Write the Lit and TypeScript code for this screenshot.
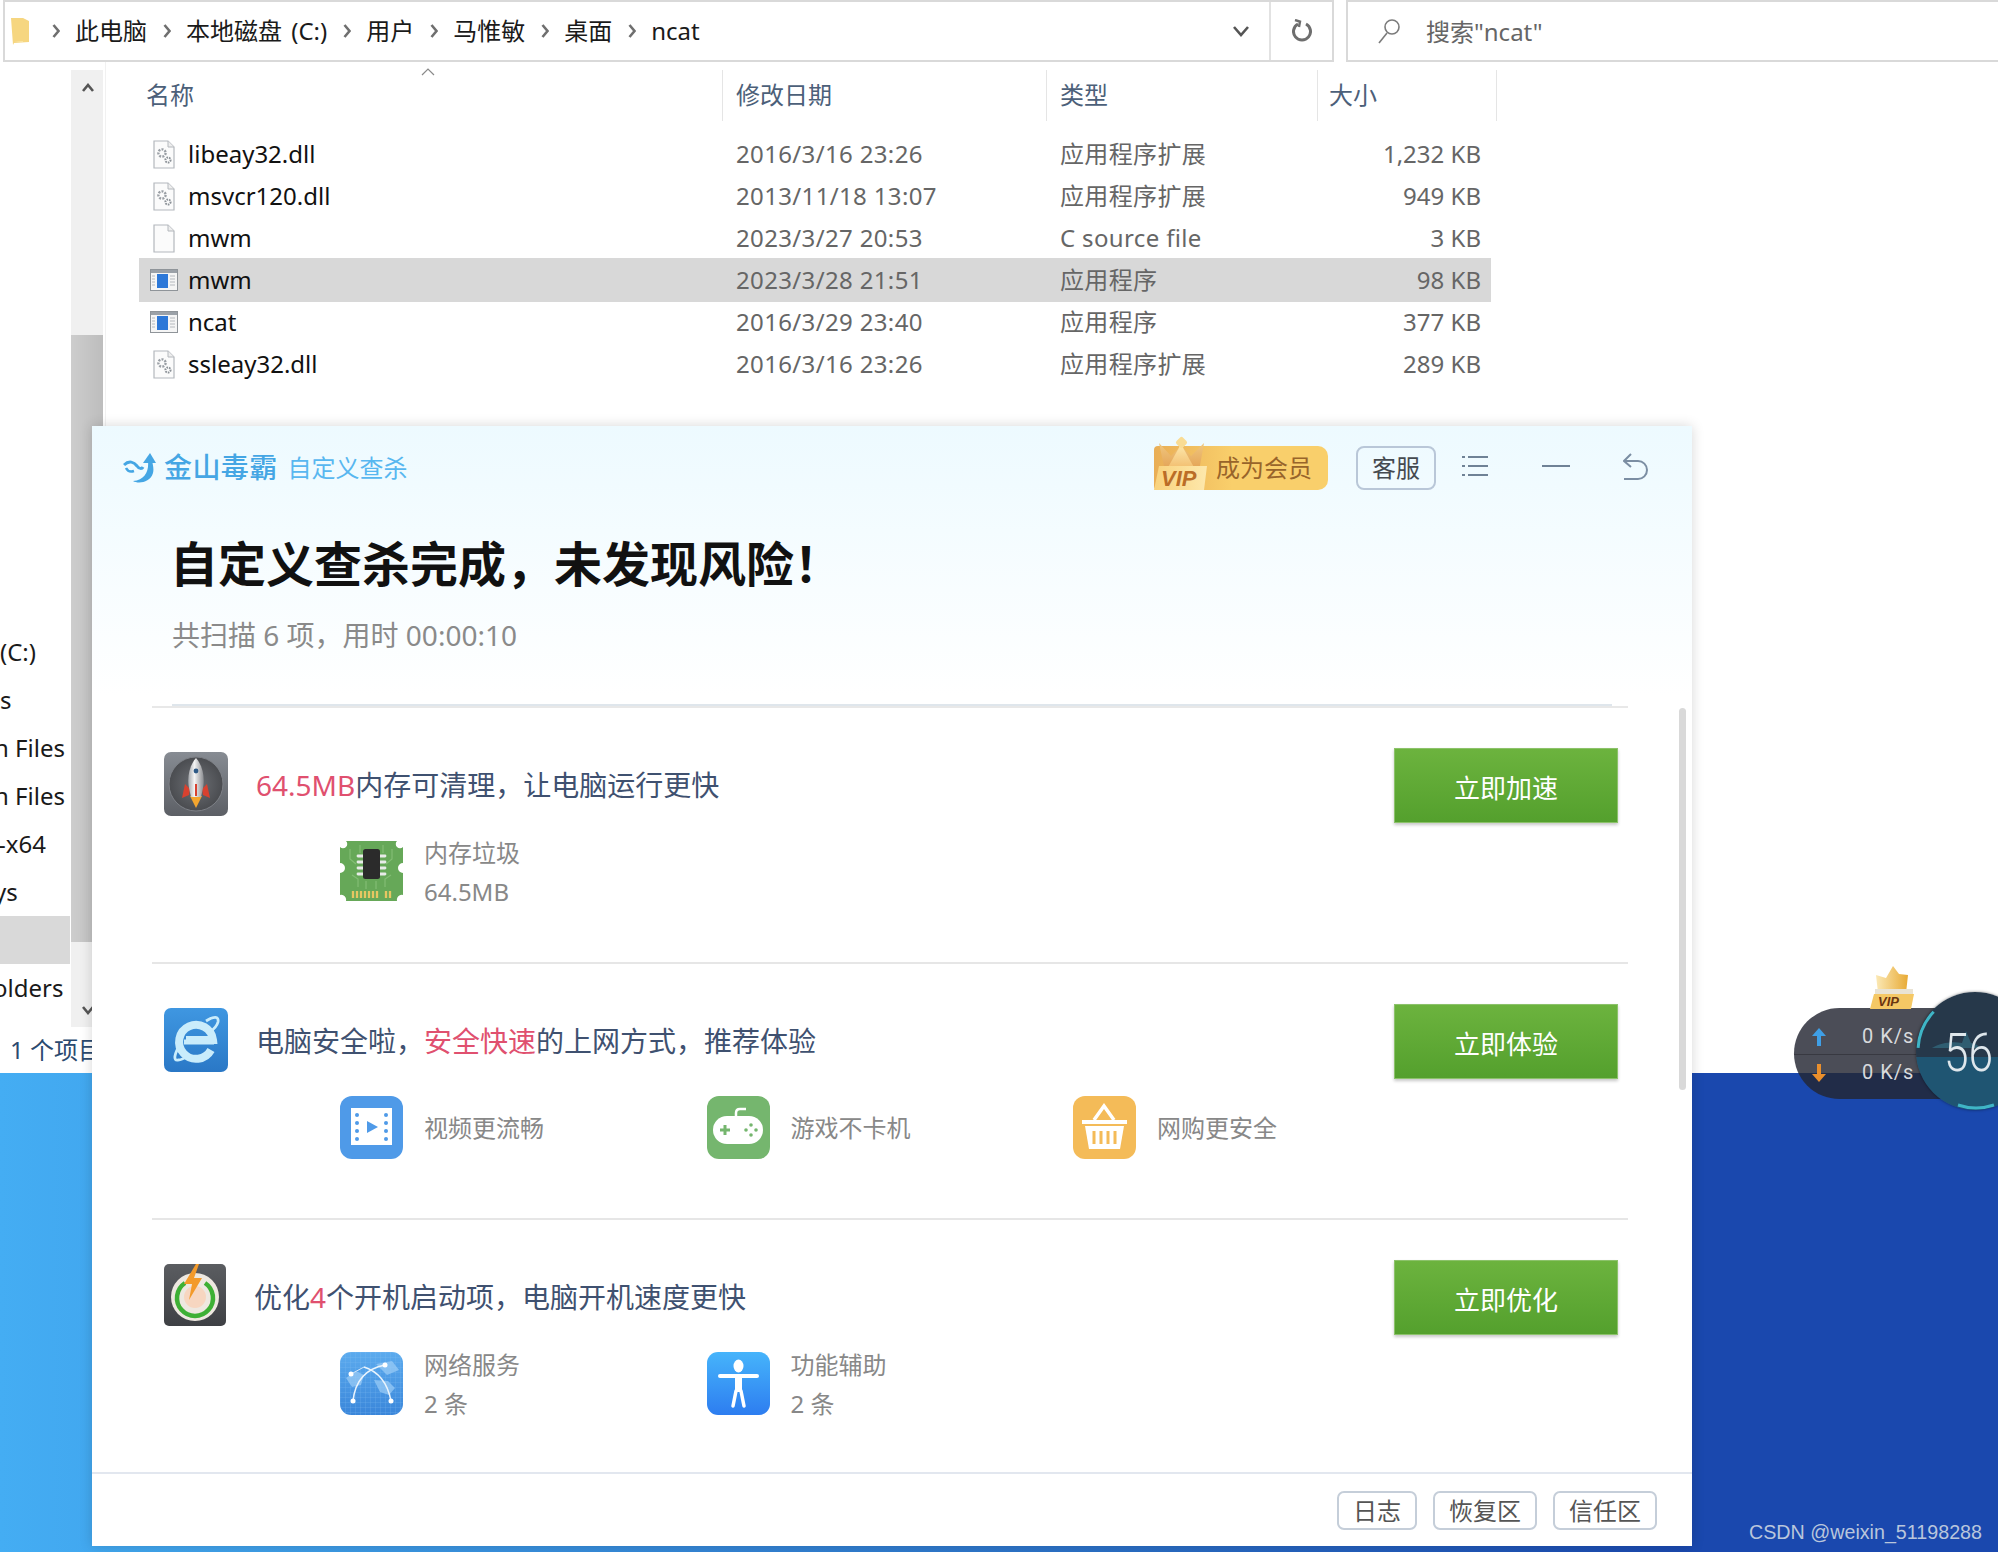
import { LitElement, html, svg, css, nothing } from 'lit';
import { customElement } from 'lit/decorators.js';

const FILES = [
  { name: 'libeay32.dll', date: '2016/3/16 23:26', type: '应用程序扩展', size: '1,232 KB', icon: 'dll' },
  { name: 'msvcr120.dll', date: '2013/11/18 13:07', type: '应用程序扩展', size: '949 KB', icon: 'dll' },
  { name: 'mwm', date: '2023/3/27 20:53', type: 'C source file', size: '3 KB', icon: 'file' },
  { name: 'mwm', date: '2023/3/28 21:51', type: '应用程序', size: '98 KB', icon: 'exe', selected: true },
  { name: 'ncat', date: '2016/3/29 23:40', type: '应用程序', size: '377 KB', icon: 'exe' },
  { name: 'ssleay32.dll', date: '2016/3/16 23:26', type: '应用程序扩展', size: '289 KB', icon: 'dll' },
];

// the window is covered by the antivirus popup, only the left of each label shows... cut to what is visible
const NAV = [
  { text: '(C:)', cut: 0 },
  { text: 's', cut: 0 },
  { text: 'n Files', cut: -6 },
  { text: 'n Files', cut: -6 },
  { text: '-x64', cut: -2 },
  { text: 'ys', cut: -6 },
  { text: '', cut: 0 },
  { text: 'olders', cut: -7 },
];
const CRUMBS = ['此电脑', '本地磁盘 (C:)', '用户', '马惟敏', '桌面', 'ncat'];

// ---- explorer icons ----

function fileIcon(kind: string) {
  if (kind === 'exe') {
    return html`<svg class="ficon exe" width="28" height="22" viewBox="0 0 28 22">
      <rect x=".5" y=".5" width="27" height="21" fill="#f5f5f5" stroke="#8f9499"/>
      <rect x="1" y="1" width="26" height="3" fill="#9ba1a8"/>
      <rect x="7" y="5" width="11" height="14" fill="#2d78d8"/>
      <path d="M20 7h5M20 10h5M20 13h5M20 16h5M2 7h3M2 10h3M2 13h3M2 16h3" stroke="#b5b9be" stroke-width="1"/>
    </svg>`;
  }
  return html`<svg class="ficon" width="22" height="29" viewBox="0 0 22 29">
    <path d="M1 1h14l6 6v21H1z" fill="#fbfbfb" stroke="#b4b8bd" stroke-width="1.2"/>
    <path d="M15 1v6h6" fill="#eee" stroke="#b4b8bd"/>
    ${kind === 'dll' ? svg`
      <circle cx="9" cy="13" r="3.6" fill="none" stroke="#9a9fa5" stroke-width="2.4" stroke-dasharray="2 1.2"/>
      <circle cx="15" cy="20" r="2.6" fill="none" stroke="#8b9197" stroke-width="2" stroke-dasharray="1.6 1"/>
    ` : nothing}
  </svg>`;
}

@customElement('file-explorer')
class FileExplorer extends LitElement {
  static styles = css`
    :host {
      display: flex;
      flex-direction: column;
      width: 1998px;
      height: 1073px;
      background: #fff;
      font-family: 'Noto Sans', 'Noto Sans CJK SC', sans-serif;
      font-size: 24px;
      color: #1a1a1a;
    }
    svg { display: block; flex: none; }
    .top { display: flex; height: 62px; flex: none; }
    .address {
      width: 1331px;
      margin-left: 3px;
      box-sizing: border-box;
      display: flex;
      align-items: center;
      border: 2px solid #d9d9d9;
    }
    .folder { margin-left: 6px; }
    .crumb { line-height: 30px; white-space: nowrap; word-spacing: 3px; }
    .sep { width: 39px; display: flex; justify-content: center; flex: none; }
    .sep.first { margin-left: 6px; }
    .dropdown { margin-left: auto; margin-right: 19px; }
    .refresh {
      width: 61px;
      height: 100%;
      border-left: 2px solid #e2e2e2;
      display: flex;
      align-items: center;
      justify-content: center;
    }
    .search {
      margin-left: 12px;
      flex: 1;
      box-sizing: border-box;
      border: 2px solid #d9d9d9;
      border-right: 0;
      display: flex;
      align-items: center;
      padding-left: 29px;
      gap: 25px;
      color: #666;
    }
    .search span { position: relative; top: -1px; }
    .body { flex: 1; display: flex; min-height: 0; }
    .nav { width: 71px; padding-top: 566px; flex: none; box-sizing: border-box; }
    .nav div { height: 48px; line-height: 48px; white-space: nowrap; overflow: hidden; }
    .nav .on { background: #d9d9d9; width: 70px; }
    .scroll {
      width: 32px;
      margin-top: 8px;
      flex: none;
      background: #f0f0f0;
      display: flex;
      flex-direction: column;
    }
    .scroll .head { height: 265px; padding: 13px 0 0 10px; box-sizing: border-box; }
    .scroll .thumb { height: 607px; background: linear-gradient(90deg, #cdcdcd, #bdbdbd); }
    .scroll .foot { flex: 1; padding: 63px 0 0 10px; box-sizing: border-box; }
    .list { position: relative; flex: 1; padding: 8px 0 0 34px; margin-left: 2px; border-left: 1px solid #f1f1f1; }
    .heads {
      display: grid;
      grid-template-columns: 583px 324px 271px 179px;
      width: 1357px;
      height: 51px;
      color: #4c6079;
      margin-bottom: 12px;
    }
    .heads div { line-height: 50px; padding-left: 13px; border-right: 1px solid #e5e5e5; }
    .heads div:first-child { padding-left: 6px; }
    .heads div:last-child { padding-left: 11px; }
    .sort { position: absolute; left: 315px; top: 6px; }
    .row {
      display: grid;
      grid-template-columns: 583px 324px 271px 172px;
      width: 1350px;
      height: 42px;
      align-items: center;
      line-height: 42px;
      color: #666;
      white-space: nowrap;
    }
    .row.sel { background: #d8d8d8; box-shadow: 0 0 0 1px #d8d8d8; }
    .row > div { padding-left: 13px; letter-spacing: .35px; }
    .row > .name { display: flex; align-items: center; color: #111; letter-spacing: 0; }
    .slot { width: 35px; display: flex; }
    .ficon.exe { margin-left: -3px; }
    .row > .size { text-align: right; padding: 0 9px 0 0; letter-spacing: 0; }
    .status {
      height: 46px;
      flex: none;
      line-height: 46px;
      padding-left: 10px;
      color: #2b4a6f;
    }
  `;

  chevron() {
    return html`<svg width="8" height="16" viewBox="0 0 8 16"><path d="M1.5 2l5 6-5 6" fill="none" stroke="#6f6f6f" stroke-width="2.600"/></svg>`;
  }

  render() {
    return html`
      <div class="top">
        <div class="address">
          <svg class="folder" width="19" height="27" viewBox="0 0 19 27">
            <path d="M0 0h12l6 3v21l-15 1-1 2z" fill="#f6d680"/><path d="M12 0v24H3l9-1z" fill="#fbe7ab"/>
          </svg>
          <span class="sep first">${this.chevron()}</span>
          ${CRUMBS.map((c, i) => html`
            <span class="crumb">${c}</span>
            ${i < CRUMBS.length - 1 ? html`<span class="sep">${this.chevron()}</span>` : nothing}
          `)}
          <svg class="dropdown" width="18" height="12" viewBox="0 0 18 12"><path d="M2 2l7 8 7-8" fill="none" stroke="#555" stroke-width="2.600"/></svg>
          <div class="refresh">
            <svg width="20" height="24" viewBox="0 0 20 24"><path d="M6 5a8.500 8.500 0 1 0 8 0" fill="none" stroke="#6e6e6e" stroke-width="3"/><path d="M3 1l5 1.500-1 5.500" fill="none" stroke="#6e6e6e" stroke-width="2.400"/></svg>
          </div>
        </div>
        <div class="search">
          <svg width="24" height="26" viewBox="0 0 24 26"><circle cx="15" cy="9" r="7" fill="none" stroke="#7b7b7b" stroke-width="1.600"/><path d="M10 15L2 25" stroke="#7b7b7b" stroke-width="1.600"/></svg>
          <span>搜索"ncat"</span>
        </div>
      </div>
      <div class="body">
        <div class="nav">
          ${NAV.map(n => html`<div class=${n.text ? '' : 'on'} style="text-indent:${n.cut}px">${n.text}</div>`)}
        </div>
        <div class="scroll">
          <div class="head"><svg width="14" height="10" viewBox="0 0 14 10"><path d="M2 8l5-6 5 6" fill="none" stroke="#555" stroke-width="2.600"/></svg></div>
          <div class="thumb"></div>
          <div class="foot"><svg width="14" height="10" viewBox="0 0 14 10"><path d="M2 2l5 6 5-6" fill="none" stroke="#555" stroke-width="2.600"/></svg></div>
        </div>
        <div class="list">
          <svg class="sort" width="14" height="8" viewBox="0 0 14 8"><path d="M1 7l6-6 6 6" fill="none" stroke="#8a8a8a" stroke-width="1.200"/></svg>
          <div class="heads"><div>名称</div><div>修改日期</div><div>类型</div><div>大小</div></div>
          ${FILES.map(f => html`
            <div class="row ${f.selected ? 'sel' : ''}">
              <div class="name"><span class="slot">${fileIcon(f.icon)}</span>${f.name}</div>
              <div>${f.date}</div>
              <div>${f.type}</div>
              <div class="size">${f.size}</div>
            </div>
          `)}
        </div>
      </div>
      <div class="status">1 个项目</div>
    `;
  }
}

// ---- antivirus window icons ----

const rocketIcon = html`<svg width="64" height="64" viewBox="0 0 64 64">
  <defs>
    <linearGradient id="rb" x1="0" y1="0" x2="0" y2="1"><stop offset="0" stop-color="#878c93"/><stop offset="1" stop-color="#5c5f65"/></linearGradient>
    <radialGradient id="rc"><stop offset="0" stop-color="#6d7075"/><stop offset="1" stop-color="#4a4c50"/></radialGradient>
    <linearGradient id="rs" x1="0" x2="1"><stop offset="0" stop-color="#a5a8ac"/><stop offset=".4" stop-color="#f4f4f4"/><stop offset="1" stop-color="#8a8c90"/></linearGradient>
  </defs>
  <rect width="64" height="64" rx="7" fill="url(#rb)"/>
  <circle cx="32" cy="32" r="27" fill="url(#rc)" stroke="#7d8086"/>
  <path d="M21 32l-3 14 7-3 1-6zM43 32l3 14-7-3-1-6z" fill="#d8412f"/>
  <path d="M26 44l6 12 6-12z" fill="#f3a52e"/>
  <path d="M32 6c-7 8-9 20-7 30l2 9h10l2-9c2-10 0-22-7-30z" fill="url(#rs)"/>
  <path d="M31 32h2v12h-2z" fill="#d8412f"/>
  <circle cx="32" cy="19" r="2.400" fill="#2e5a86"/>
</svg>`;

const ieIcon = html`<svg width="64" height="64" viewBox="0 0 64 64">
  <defs><linearGradient id="ib" x1="0" y1="0" x2="0" y2="1"><stop offset="0" stop-color="#3f97e1"/><stop offset="1" stop-color="#2a78c6"/></linearGradient></defs>
  <rect width="64" height="64" rx="7" fill="url(#ib)"/>
  <path d="M42 13c8-5 13-5 12 1-1 4-4 7-8 10M17 35c-7 11-8 18-3 17 3 0 7-2 11-5" fill="none" stroke="#c9ecfb" stroke-width="2.800"/>
  <path d="M47 42a17 17 0 1 1 2-10H22" fill="none" stroke="#c9ecfb" stroke-width="8"/>
  <path d="M20 34h30" stroke="#c9ecfb" stroke-width="5"/>
</svg>`;

const powerIcon = html`<svg width="62" height="62" viewBox="0 0 62 62">
  <defs><linearGradient id="pb" x1="0" y1="0" x2="0" y2="1"><stop offset="0" stop-color="#5b5d61"/><stop offset="1" stop-color="#3e4044"/></linearGradient></defs>
  <rect width="62" height="62" rx="5" fill="url(#pb)"/>
  <circle cx="31" cy="33" r="24" fill="#eee8e0"/>
  <circle cx="31" cy="33" r="11" fill="#f7d6c0"/>
  <path d="M21 19a18 18 0 1 0 20 0" fill="none" stroke="#3eb035" stroke-width="4.500"/>
  <path d="M32 0L20 20h8l-3 16 13-22h-8l5-14z" fill="#f39a2a"/>
</svg>`;

const chipIcon = html`<svg width="63" height="61" viewBox="0 0 63 61">
  <path d="M6 0h51a4 4 0 0 0 6 6v16a5 5 0 0 0 0 10v22a5 5 0 0 0-6 6H6a5 5 0 0 0-6-6V32a5 5 0 0 0 0-10V6a4 4 0 0 0 6-6z" fill="#66a858"/>
  <path d="M10 8v10l6 5M52 8v10l-6 5M20 4v8M43 4v8M12 34l6 4v8M51 34l-6 4v8M26 40v8M36 40v8" fill="none" stroke="#82bd73" stroke-width="1.200"/>
  <path d="M18 15h6M18 21h6M18 27h6M18 33h6M39 15h6M39 21h6M39 27h6M39 33h6" stroke="#e8ebe8" stroke-width="2.800" stroke-linecap="round"/>
  <rect x="23" y="8" width="17" height="30" rx="2.500" fill="#2b2b2b"/>
  <path d="M13 50v7M17 50v7M21 50v7M25 50v7M29 50v7M33 50v7M37 50v7M46 50v7M50 50v7" stroke="#e7c662" stroke-width="2.300"/>
</svg>`;

const videoIcon = html`<svg width="63" height="63" viewBox="0 0 63 63">
  <rect width="63" height="63" rx="12" fill="#4f9ae8"/>
  <rect x="11" y="12" width="41" height="37" fill="#fff"/>
  <g fill="#4f9ae8">
    <circle cx="17" cy="19" r="2"/><circle cx="17" cy="27" r="2"/><circle cx="17" cy="35" r="2"/><circle cx="17" cy="43" r="2"/>
    <circle cx="46" cy="19" r="2"/><circle cx="46" cy="27" r="2"/><circle cx="46" cy="35" r="2"/><circle cx="46" cy="43" r="2"/>
    <path d="M27 25l11 6-11 6z"/>
  </g>
</svg>`;

const gameIcon = html`<svg width="63" height="63" viewBox="0 0 63 63">
  <rect width="63" height="63" rx="12" fill="#75b66e"/>
  <path d="M29 21v-4c0-3 2-4 4-4h6" fill="none" stroke="#fff" stroke-width="2.500"/>
  <rect x="6" y="20" width="50" height="28" rx="14" fill="#fff"/>
  <path d="M18 29v10M13 34h10" stroke="#75b66e" stroke-width="3"/>
  <g fill="#75b66e"><circle cx="44" cy="29" r="1.800"/><circle cx="44" cy="39" r="1.800"/><circle cx="39" cy="34" r="1.800"/><circle cx="49" cy="34" r="1.800"/></g>
</svg>`;

const basketIcon = html`<svg width="63" height="63" viewBox="0 0 63 63">
  <rect width="63" height="63" rx="12" fill="#f4bb58"/>
  <path d="M21 24l10-14 10 14" fill="none" stroke="#fff" stroke-width="3.500"/>
  <rect x="9" y="24" width="45" height="4" fill="#fff"/>
  <path d="M12 30h39l-4 23H16z" fill="#fff"/>
  <path d="M21 35v13M28 35v13M35 35v13M42 35v13" stroke="#f4bb58" stroke-width="3"/>
</svg>`;

const netIcon = html`<svg width="63" height="63" viewBox="0 0 63 63">
  <defs>
    <linearGradient id="nb" x1="0" y1="0" x2="0" y2="1"><stop offset="0" stop-color="#5cabee"/><stop offset="1" stop-color="#3a86da"/></linearGradient>
    <pattern id="ng" width="5" height="5" patternUnits="userSpaceOnUse"><path d="M5 0H0v5" fill="none" stroke="#8cc4f3" stroke-width=".5"/></pattern>
  </defs>
  <rect width="63" height="63" rx="11" fill="url(#nb)"/>
  <rect width="63" height="63" rx="11" fill="url(#ng)" opacity=".7"/>
  <path d="M6 26l10-7 8 4-3 10-9 2zM36 12l16-3 7 9-12 5zM34 28l14 1 7 7-6 7-9-3z" fill="#9ccdf6" opacity=".7"/>
  <path d="M13 49C15 30 24 17 45 13M51 49C48 33 40 20 24 15" fill="none" stroke="#eaf4fd" stroke-width="1.500"/>
  <path d="M11 22L24 15" fill="none" stroke="#cfe5fa" stroke-width="1"/>
  <g fill="#fff"><circle cx="13" cy="49" r="2.500"/><circle cx="51" cy="49" r="2.500"/><circle cx="11" cy="22" r="2.500"/><circle cx="45" cy="13" r="2.500"/></g>
</svg>`;

const accessIcon = html`<svg width="63" height="63" viewBox="0 0 63 63">
  <defs><linearGradient id="ab" x1="0" y1="0" x2="0" y2="1"><stop offset="0" stop-color="#46b4fb"/><stop offset="1" stop-color="#2d7df0"/></linearGradient></defs>
  <rect width="63" height="63" rx="11" fill="url(#ab)"/>
  <ellipse cx="31.500" cy="14" rx="5" ry="6.500" fill="#fff"/>
  <path d="M13 24h37" stroke="#fff" stroke-width="4" stroke-linecap="round"/>
  <path d="M28 25h7v15h-7z" fill="#fff"/>
  <path d="M34 39l3 15M29 39l-3 15" fill="none" stroke="#fff" stroke-width="3.500" stroke-linecap="round"/>
</svg>`;

const SECTIONS = [
  {
    icon: rocketIcon,
    title: html`<em>64.5MB</em>内存可清理，让电脑运行更快`,
    action: '立即加速',
    subs: [{ icon: chipIcon, lines: ['内存垃圾', '64.5MB'] }],
  },
  {
    icon: ieIcon,
    title: html`电脑安全啦，<em>安全快速</em>的上网方式，推荐体验`,
    action: '立即体验',
    subs: [
      { icon: videoIcon, lines: ['视频更流畅'] },
      { icon: gameIcon, lines: ['游戏不卡机'] },
      { icon: basketIcon, lines: ['网购更安全'] },
    ],
  },
  {
    icon: powerIcon,
    title: html`优化<em>4</em>个开机启动项，电脑开机速度更快`,
    action: '立即优化',
    subs: [
      { icon: netIcon, lines: ['网络服务', '2 条'] },
      { icon: accessIcon, lines: ['功能辅助', '2 条'] },
    ],
  },
];

@customElement('scan-window')
class ScanWindow extends LitElement {
  static styles = css`
    :host {
      display: flex;
      flex-direction: column;
      width: 1600px;
      height: 1120px;
      background: linear-gradient(#edfaff, #fff 270px);
      box-shadow: 0 0 12px rgba(0, 0, 0, .16);
      font-family: 'Noto Sans', 'Noto Sans CJK SC', sans-serif;
      position: relative;
    }
    svg { display: block; flex: none; }
    header {
      height: 84px;
      flex: none;
      display: flex;
      align-items: center;
      padding: 0 44px 0 31px;
    }
    .brand { margin: 0 0 4px 8px; font-size: 28px; font-weight: 500; color: #45a6e4; letter-spacing: .4px; }
    .mode { margin: 0 0 4px 10px; font-size: 24px; color: #58b7f0; }
    .vip {
      margin-left: auto;
      position: relative;
      width: 174px;
      height: 44px;
      box-sizing: border-box;
      padding-left: 62px;
      line-height: 44px;
      border-radius: 4px 10px 10px 4px;
      background: linear-gradient(90deg, #e9ae56, #f9cf6b 45%);
      color: #98642a;
      font-size: 24px;
      white-space: nowrap;
    }
    .crown { position: absolute; left: 0; top: -10px; }
    .kefu {
      margin-left: 28px;
      width: 80px;
      height: 44px;
      box-sizing: border-box;
      border: 2px solid #b9c7d8;
      border-radius: 8px;
      font-size: 24px;
      line-height: 40px;
      text-align: center;
      color: #454a50;
    }
    .menu { margin: 0 0 4px 26px; }
    .min { margin: 0 0 4px 54px; }
    .back { margin: 0 0 4px 53px; }
    .hero { flex: none; padding: 20px 80px 0; }
    h1 { margin: 0 0 0 -2px; font-size: 48px; line-height: 68px; font-weight: 700; color: #111; white-space: nowrap; }
    .summary { margin-top: 17px; font-size: 28px; line-height: 40px; color: #8a8a8a; }
    .rule { margin-top: 49px; height: 2px; background: #dfe6ec; }
    .rule2 { margin: 0 -16px 0 -20px; height: 2px; background: #e8e8e8; }
    .sections { flex: 1; min-height: 0; overflow: hidden; }
    section { margin: 0 64px 0 60px; padding: 40px 10px 0 12px; height: 214px; border-bottom: 2px solid #e6e6e6; }
    section:last-child { border-bottom: 0; }
    .head { display: flex; align-items: center; height: 75px; }
    .head > svg { align-self: flex-start; margin-top: 4px; }
    .title { margin: 0 0 3px 28px; font-size: 28px; color: #3f5170; white-space: nowrap; }
    .title em { font-style: normal; color: #e0506f; }
    .go {
      margin-left: auto;
      width: 224px;
      height: 75px;
      box-sizing: border-box;
      border: 1px solid #8cc26a;
      background: linear-gradient(#6cb33e, #54a02d);
      box-shadow: 0 2px 3px rgba(0, 0, 0, .22);
      color: #fff;
      font-size: 26px;
      line-height: 79px;
      text-align: center;
    }
    .subs { display: flex; margin-top: 17px; padding-left: 176px; }
    .sub { width: 366.500px; height: 63px; display: flex; align-items: center; gap: 21px; font-size: 24px; line-height: 39px; color: #888; }
    footer {
      height: 74px;
      flex: none;
      box-sizing: border-box;
      border-top: 2px solid #e2e7ef;
      display: flex;
      align-items: center;
      justify-content: flex-end;
      gap: 16px;
      padding-right: 35px;
    }
    footer div {
      height: 39px;
      box-sizing: border-box;
      padding: 0 14px;
      border: 2px solid #c5ced9;
      border-radius: 7px;
      font-size: 24px;
      line-height: 35px;
      color: #555;
      background: #fff;
    }
    .bar {
      position: absolute;
      left: 1587px;
      top: 282px;
      width: 7px;
      height: 382px;
      border-radius: 4px;
      background: #d9d9d9;
    }
  `;

  render() {
    return html`
      <header>
        <svg width="33" height="30" viewBox="0 0 33 30">
          <path d="M1 12c5-5 10-3 13 1 2 3 5 3 6 1" fill="none" stroke="#45a6e4" stroke-width="3"/>
          <path d="M3 15c2 4 5 4 8 3" fill="none" stroke="#45a6e4" stroke-width="2.500"/>
          <path d="M25 8c1 10-3 19-15 20 5 3 17 2 20-8 1-4 0-8-1-12z" fill="#45a6e4"/>
          <path d="M27 0l6 10H20z" fill="#45a6e4"/>
        </svg>
        <span class="brand">金山毒霸</span>
        <span class="mode">自定义查杀</span>
        <div class="vip">
          <svg class="crown" width="56" height="54" viewBox="0 0 56 54">
            <defs>
              <linearGradient id="cg" x1="0" y1="0" x2="0" y2="1"><stop offset="0" stop-color="#f0c77f"/><stop offset="1" stop-color="#e3a052"/></linearGradient>
              <linearGradient id="cf" x1="0" y1="0" x2="0" y2="1"><stop offset="0" stop-color="#fde9ae"/><stop offset="1" stop-color="#f1b968"/></linearGradient>
              <linearGradient id="tg" x1="0" x2="1"><stop offset="0" stop-color="#f9d27c"/><stop offset="1" stop-color="#fde8ac"/></linearGradient>
            </defs>
            <path d="M5 7l12 13 10-10 10 10 13-13-5 28H11z" fill="url(#cg)"/>
            <path d="M27 8l15 27H12z" fill="url(#cf)"/>
            <rect x="23" y="2" width="9" height="9" rx="2" fill="#f9dc94" transform="rotate(45 27.500 6.500)"/>
            <path d="M5 30h48l-3 24H0z" fill="url(#tg)"/>
            <text x="7" y="50" font-family="Liberation Sans" font-size="22" font-weight="700" font-style="italic" fill="#bb6d27">VIP</text>
          </svg>
          成为会员
        </div>
        <div class="kefu">客服</div>
        <svg class="menu" width="26" height="22" viewBox="0 0 26 22"><path d="M0 2h3M6 2h20M0 11h3M6 11h20M0 20h3M6 20h20" stroke="#6f8296" stroke-width="2"/></svg>
        <svg class="min" width="28" height="4" viewBox="0 0 28 4"><path d="M0 2h28" stroke="#6f8296" stroke-width="2"/></svg>
        <svg class="back" width="25" height="27" viewBox="0 0 25 27"><path d="M8 1L1 8l7 6M1 8h14a9 9 0 0 1 0 18H1" fill="none" stroke="#7b8ea3" stroke-width="2"/></svg>
      </header>
      <div class="hero">
        <h1>自定义查杀完成，未发现风险！</h1>
        <div class="summary">共扫描 6 项，用时 00:00:10</div>
        <div class="rule"></div>
        <div class="rule2"></div>
      </div>
      <div class="sections">
        ${SECTIONS.map(s => html`
          <section>
            <div class="head">
              ${s.icon}
              <div class="title">${s.title}</div>
              <div class="go">${s.action}</div>
            </div>
            <div class="subs">
              ${s.subs.map(sub => html`
                <div class="sub">${sub.icon}<div>${sub.lines.map(l => html`<div>${l}</div>`)}</div></div>
              `)}
            </div>
          </section>
        `)}
      </div>
      <footer><div>日志</div><div>恢复区</div><div>信任区</div></footer>
      <div class="bar"></div>
    `;
  }
}

@customElement('app-root')
class AppRoot extends LitElement {
  static styles = css`
    :host {
      display: block;
      position: relative;
      width: 1998px;
      height: 1552px;
      overflow: hidden;
      background: linear-gradient(90deg, #44adf3, #2b70c6 55%, #1a48ae 85%);
    }
    file-explorer { position: absolute; left: 0; top: 0; }
    scan-window { position: absolute; left: 92px; top: 426px; }
    .mark {
      position: absolute;
      right: 16px;
      bottom: 8px;
      font: 19.700px/24px 'Liberation Sans', sans-serif;
      color: #b9c6dc;
    }
    /* speed widget floating over the desktop */
    .speed {
      position: absolute;
      left: 1794px;
      top: 1008px;
      width: 190px;
      height: 91px;
      border-radius: 46px;
      background: rgba(35, 38, 50, .82);
      font: 20px/35px 'Roboto', sans-serif;
      color: #d8dadd;
      letter-spacing: 1px;
    }
    .speed .line { display: flex; align-items: center; height: 35px; padding-left: 18px; gap: 36px; }
    .speed .line:first-child { margin-top: 11px; border-bottom: 1px solid rgba(0, 0, 0, .25); }
    .ball {
      position: absolute;
      left: 1916px;
      top: 992px;
      width: 118px;
      height: 118px;
      border-radius: 50%;
      overflow: hidden;
      background: linear-gradient(#26384a 55%, #1f5572 55%);
      box-shadow: 0 0 3px rgba(0, 0, 0, .5);
    }
    .ball svg { position: absolute; left: 0; top: 0; }
    .ball span {
      position: absolute;
      left: 28px;
      top: 31px;
      font: 300 54px/60px 'Roboto', sans-serif;
      color: #dfe7ec;
      transform: scaleX(.82);
      transform-origin: left;
    }
    .vipcrown { position: absolute; left: 1870px; top: 965px; }
  `;

  render() {
    return html`
      <file-explorer></file-explorer>
      <scan-window></scan-window>
      <div class="speed">
        <div class="line">
          <svg width="14" height="18" viewBox="0 0 14 18"><path d="M7 0l7 8H9v10H5V8H0z" fill="#3f9fe6"/></svg><span>0 K/s</span>
        </div>
        <div class="line">
          <svg width="14" height="18" viewBox="0 0 14 18"><path d="M7 18l7-8H9V0H5v10H0z" fill="#ea8f2c"/></svg><span>0 K/s</span>
        </div>
      </div>
      <div class="ball">
        <svg width="118" height="118" viewBox="0 0 118 118">
          <path d="M16 56c8-5 20-7 30-5l4-12 5 12c6 1 8 3 8 5H16z" fill="#2f5d71"/>
          <circle cx="59" cy="59" r="57" fill="none" stroke="#3fb5c6" stroke-width="3" stroke-dasharray="40 260" stroke-dashoffset="118"/>
          <path d="M42 113a56 56 0 0 0 36 0" fill="none" stroke="#3fb5c6" stroke-width="3"/>
        </svg>
        <span>56</span>
      </div>
      <svg class="vipcrown" width="45" height="45" viewBox="0 0 45 45">
        <defs><linearGradient id="vc" x1="0" x2="1"><stop offset="0" stop-color="#fbe9b6"/><stop offset="1" stop-color="#e8aa35"/></linearGradient></defs>
        <path d="M6 10l10 3 7-12 6 8 9 1-2 18H8z" fill="url(#vc)"/>
        <rect x="5" y="24" width="38" height="5" fill="#e9e3d4"/>
        <path d="M4 29h40l-3 15H0z" fill="#f5c865"/>
        <text x="8" y="41" font-family="Liberation Sans" font-size="13" font-weight="700" font-style="italic" fill="#6a3410">VIP</text>
      </svg>
      <div class="mark">CSDN @weixin_51198288</div>
    `;
  }
}
